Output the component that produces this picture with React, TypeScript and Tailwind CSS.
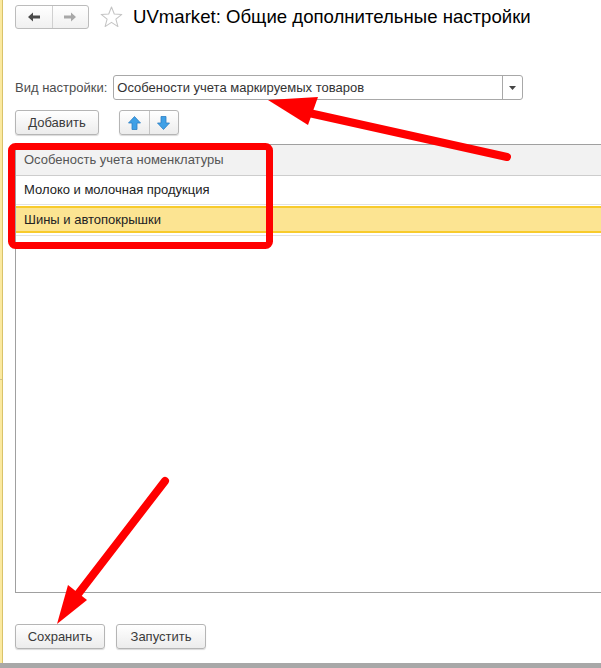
import React from 'react';

const font = { fontFamily: '"Liberation Sans", Arial, sans-serif' };

function NavArrow({ dir, color }: { dir: 'left' | 'right'; color: string }) {
    return (
        <svg width="12" height="10" viewBox="0 0 12 10">
            {dir === 'left' ? (
                <path d="M0 5 L5 0.5 V3.5 H12 V6.5 H5 V9.5 Z" fill={color} />
            ) : (
                <path d="M12 5 L7 0.5 V3.5 H0 V6.5 H7 V9.5 Z" fill={color} />
            )}
        </svg>
    );
}

function BlueArrow({ up }: { up: boolean }) {
    return (
        <svg width="13" height="14" viewBox="0 0 13 14">
            <path
                d={up ? 'M6.5 0.5 L12.5 7 H9 V13.5 H4 V7 H0.5 Z' : 'M6.5 13.5 L12.5 7 H9 V0.5 H4 V7 H0.5 Z'}
                fill="#3fa0e6"
                stroke="#2b7fc4"
                strokeWidth="0.8"
            />
        </svg>
    );
}

function Button({ label, width }: { label: string; width: string }) {
    return (
        <button
            className={`h-[25px] ${width} rounded-[3px] border border-[#b5b5b5] bg-gradient-to-b from-white to-[#ececec] text-[13px] text-[#3a3a3a] shadow-[0_1px_1px_rgba(0,0,0,0.15)]`}
        >
            {label}
        </button>
    );
}

export default function App() {
    return (
        <div className="relative flex h-[668px] w-[601px] flex-col overflow-hidden bg-white" style={font}>
            <div className="flex min-h-0 flex-1">
                {/* left yellow strip */}
                <div className="flex w-[3px] flex-col border-r border-[#d9c36a] bg-[#fbe9a0]">
                    <div className="h-[380px] border-b border-[#cfc08a]" />
                </div>

                <div className="flex flex-1 flex-col pl-[12px]">
                    {/* header */}
                    <div className="mt-[5px] flex h-[24px] items-center">
                        <div className="flex h-[24px] w-[74px] rounded-[3px] border border-[#bcbcbc] bg-gradient-to-b from-white to-[#f0f0f0]">
                            <div className="flex flex-1 items-center justify-center border-r border-[#d0d0d0]">
                                <NavArrow dir="left" color="#4a4a4a" />
                            </div>
                            <div className="flex flex-1 items-center justify-center">
                                <NavArrow dir="right" color="#a8a8a8" />
                            </div>
                        </div>
                        <svg className="ml-[11px]" width="23" height="22" viewBox="0 0 24 23">
                            <path
                                d="M12 1 L14.9 8.4 L22.8 8.8 L16.6 13.8 L18.7 21.5 L12 17.1 L5.3 21.5 L7.4 13.8 L1.2 8.8 L9.1 8.4 Z"
                                fill="none"
                                stroke="#c4c4c4"
                                strokeWidth="1.1"
                                strokeLinejoin="round"
                            />
                        </svg>
                        <div className="ml-[10px] text-[18.6px] leading-none text-black">
                            UVmarket: Общие дополнительные настройки
                        </div>
                    </div>

                    {/* setting kind */}
                    <div className="mt-[46px] flex h-[25px] items-center">
                        <span className="text-[13px] text-[#4d4d4d]">Вид настройки:</span>
                        <div className="ml-[6px] flex h-[25px] w-[410px] rounded-[3px] border border-[#a8a8a8]">
                            <div className="flex flex-1 items-center pl-[3px] text-[13px] text-[#333]">
                                Особености учета маркируемых товаров
                            </div>
                            <div className="flex w-[20px] items-center justify-center border-l border-[#a8a8a8]">
                                <svg width="7" height="4" viewBox="0 0 7 4">
                                    <path d="M0 0 H7 L3.5 4 Z" fill="#444" />
                                </svg>
                            </div>
                        </div>
                    </div>

                    {/* toolbar */}
                    <div className="mt-[10px] flex h-[25px] items-center">
                        <Button label="Добавить" width="w-[84px]" />
                        <div className="ml-[20px] flex h-[25px] w-[60px] rounded-[3px] border border-[#b5b5b5] bg-gradient-to-b from-white to-[#ececec] shadow-[0_1px_1px_rgba(0,0,0,0.15)]">
                            <div className="flex flex-1 items-center justify-center border-r border-[#c4c4c4]">
                                <BlueArrow up />
                            </div>
                            <div className="flex flex-1 items-center justify-center">
                                <BlueArrow up={false} />
                            </div>
                        </div>
                    </div>

                    {/* table */}
                    <div className="mt-[9px] flex h-[449px] flex-col border-t border-l border-b border-[#a0a0a0] text-[13px]">
                        <div className="flex h-[31px] items-center border-b border-[#cdcdcd] bg-[#f2f2f2] pl-[8px] text-[#555]">
                            Особеность учета номенклатуры
                        </div>
                        <div className="flex h-[29px] items-center border-b border-[#e2e2e2] pl-[8px] text-[#222]">
                            Молоко и молочная продукция
                        </div>
                        <div className="mt-[1px] flex h-[27px] items-center border-y-2 border-[#f8cb2c] bg-[#fce492] pl-[8px] text-[#222]">
                            Шины и автопокрышки
                        </div>
                        <div className="mt-[2px] border-t border-[#e2e2e2]" />
                    </div>

                    {/* bottom buttons */}
                    <div className="mt-[31px] flex gap-[11px]">
                        <Button label="Сохранить" width="w-[90px]" />
                        <Button label="Запустить" width="w-[90px]" />
                    </div>
                </div>
            </div>
            <div className="h-[5px] bg-[#a8a8a8]" />

            {/* red annotations */}
            <svg className="pointer-events-none absolute inset-0" width="601" height="668" viewBox="0 0 601 668">
                <rect x="11.5" y="146.5" width="258" height="99" rx="4" fill="none" stroke="#ff0000" strokeWidth="7" />
                <line x1="507" y1="157" x2="300" y2="111" stroke="#ff0000" strokeWidth="8" strokeLinecap="round" />
                <path d="M268 100 L318 97 L308 125 Z" fill="#ff0000" />
                <line x1="165" y1="481" x2="75" y2="598" stroke="#ff0000" strokeWidth="8" strokeLinecap="round" />
                <path d="M57 624 L68 585 L87 600 Z" fill="#ff0000" />
            </svg>
        </div>
    );
}
